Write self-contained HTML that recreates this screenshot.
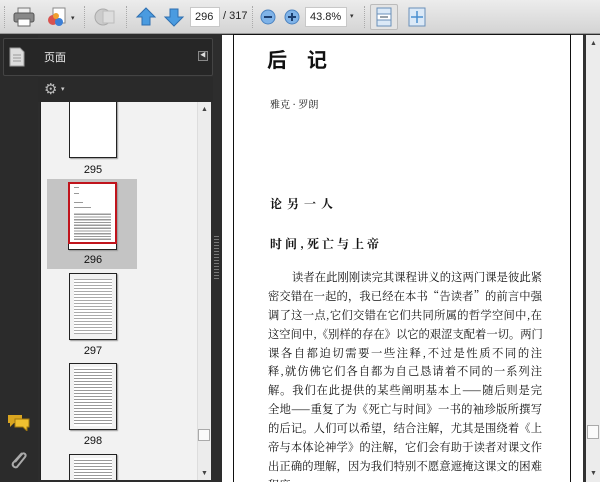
<!DOCTYPE html>
<html><head><meta charset="utf-8"><style>
*{margin:0;padding:0;box-sizing:border-box}
body{width:600px;height:482px;overflow:hidden;position:relative;background:#2d2d2d;font-family:"Liberation Sans","Noto Sans CJK SC",sans-serif}
.abs{position:absolute}
#tb{left:0;top:0;width:600px;height:34px;background:linear-gradient(#ececec,#d4d4d4);border-bottom:1px solid #9a9a9a}
.inp{background:#fff;border:1px solid #c8c8c8;font-size:11px;color:#222;padding:3px 4px;height:20px;top:7px}
.sep{width:2px;height:22px;top:6px;border-left:1px dotted #aaa}
.thumb{background:#fff;border:1.5px solid #222;box-shadow:1px 1px 1px #999}
.lbl{font-size:11px;color:#111;width:50px;text-align:center}
.ln{position:absolute;left:268px;width:274px;font-family:"Noto Serif CJK SC","Noto Sans CJK SC",serif;font-size:11.3px;text-align:justify;text-align-last:justify;color:#111;white-space:nowrap;height:16px;line-height:16px}
.tl{position:absolute;height:1px;background:#999;left:4px;right:4px}
</style></head><body>
<div id="tb" class="abs">
 <div class="abs sep" style="left:4px"></div>
 <svg class="abs" style="left:13px;top:7px" width="22" height="20"><rect x="5" y="1" width="12" height="6" fill="#eee" stroke="#777"/><rect x="1" y="6" width="20" height="9" rx="2" fill="#888" stroke="#555"/><rect x="5" y="12" width="12" height="7" fill="#fff" stroke="#666"/></svg>
 <svg class="abs" style="left:45px;top:6px" width="24" height="22"><rect x="8" y="2" width="12" height="15" fill="#fff" stroke="#888"/><circle cx="8" cy="14" r="5" fill="#d9534f"/><circle cx="14" cy="16" r="4" fill="#3d7fd6"/><circle cx="11" cy="10" r="3" fill="#f0a030"/></svg>
 <div class="abs" style="left:71px;top:14px;font-size:7px;color:#333">▾</div>
 <div class="abs sep" style="left:84px"></div>
 <svg class="abs" style="left:93px;top:6px" width="24" height="22"><circle cx="10" cy="11" r="8" fill="#ccc" stroke="#aaa"/><rect x="10" y="5" width="11" height="12" fill="#ddd" stroke="#bbb"/></svg>
 <div class="abs sep" style="left:126px"></div>
 <svg class="abs" style="left:135px;top:6px" width="22" height="22"><path d="M11 2 L20 11 L15 11 L15 19 L7 19 L7 11 L2 11 Z" fill="#4a9be0" stroke="#2f6fb0"/></svg>
 <svg class="abs" style="left:163px;top:6px" width="22" height="22"><path d="M11 20 L20 11 L15 11 L15 3 L7 3 L7 11 L2 11 Z" fill="#4a9be0" stroke="#2f6fb0"/></svg>
 <div class="abs inp" style="left:190px;width:30px">296</div>
 <div class="abs" style="left:223px;top:10px;font-size:11px;color:#222">/ 317</div>
 <div class="abs sep" style="left:252px"></div>
 <svg class="abs" style="left:260px;top:9px" width="16" height="16"><circle cx="8" cy="8" r="7" fill="#7fb3e8" stroke="#4a82c0"/><rect x="4" y="7" width="8" height="2" fill="#1d3f70"/></svg>
 <svg class="abs" style="left:284px;top:9px" width="16" height="16"><circle cx="8" cy="8" r="7" fill="#7fb3e8" stroke="#4a82c0"/><rect x="4" y="7" width="8" height="2" fill="#1d3f70"/><rect x="7" y="4" width="2" height="8" fill="#1d3f70"/></svg>
 <div class="abs inp" style="left:305px;width:42px">43.8%</div>
 <div class="abs" style="left:350px;top:12px;font-size:7px;color:#333">▾</div>
 <div class="abs sep" style="left:364px"></div>
 <div class="abs" style="left:370px;top:4px;width:28px;height:26px;background:#e4e4e4;border:1px solid #bbb;border-radius:2px"></div>
 <svg class="abs" style="left:376px;top:7px" width="16" height="20"><rect x="1" y="1" width="14" height="18" fill="#dbe9f7" stroke="#6a8fb8"/><rect x="1" y="7" width="14" height="6" fill="#fff" stroke="#6a8fb8"/><path d="M4 10h8" stroke="#345" /></svg>
 <svg class="abs" style="left:408px;top:7px" width="18" height="20"><rect x="1" y="1" width="16" height="18" fill="#dbe9f7" stroke="#6a8fb8"/><path d="M9 4v12M3 10h12" stroke="#4a8fd0" stroke-width="1.5"/></svg>
</div>
<div class="abs" style="left:0;top:35px;width:38px;height:447px;background:#2b2b2b"></div>
<div class="abs" style="left:3px;top:38px;width:210px;height:38px;background:#262626;border:1px solid #444;border-radius:2px"></div>
<svg class="abs" style="left:9px;top:47px" width="16" height="20"><path d="M1 1h10l4 4v14H1z" fill="#ddd" stroke="#999"/><path d="M4 8h8M4 11h8M4 14h8" stroke="#999"/></svg>
<div class="abs" style="left:44px;top:49px;font-size:11px;color:#eee">页面</div>
<div class="abs" style="left:198px;top:51px;width:10px;height:10px;border:1px solid #888;background:#333;font-size:6px;color:#ddd;text-align:center;line-height:8px">◀</div>
<div class="abs" style="left:38px;top:77px;width:175px;height:25px;background:#2a2a2a"></div>
<div class="abs" style="left:44px;top:80px;font-size:15px;color:#bbb">⚙</div>
<div class="abs" style="left:61px;top:85px;font-size:7px;color:#ccc">▾</div>
<div class="abs" style="left:40px;top:102px;width:171px;height:378px;background:#f2f2f2;border-left:1px solid #222;overflow:hidden">
 <div class="abs thumb" style="left:28px;top:-4px;width:48px;height:60px"></div>
 <div class="abs lbl" style="left:27px;top:62px">295</div>
 <div class="abs" style="left:6px;top:77px;width:90px;height:90px;background:#c4c4c4"></div>
 <div class="abs thumb" style="left:27px;top:80px;width:49px;height:68px"></div>
 <div class="abs" style="left:27px;top:80px;width:49px;height:62px;border:2px solid #c0141c"><div class="tl" style="top:3px;right:36px"></div><div class="tl" style="top:9px;right:36px"></div><div class="tl" style="top:18px;right:32px"></div><div class="tl" style="top:23px;right:24px"></div><div class="abs" style="left:4px;right:4px;top:28px;height:28px;background:repeating-linear-gradient(#fff 0 1.5px,#999 1.5px 2.8px)"></div></div>
 <div class="abs lbl" style="left:27px;top:152px">296</div>
 <div class="abs thumb" style="left:28px;top:171px;width:48px;height:67px;background:repeating-linear-gradient(#fff 0 2px,#aaa 2px 3px);background-clip:content-box;padding:5px 4px"></div>
 <div class="abs lbl" style="left:27px;top:243px">297</div>
 <div class="abs thumb" style="left:28px;top:261px;width:48px;height:67px;background:repeating-linear-gradient(#fff 0 2px,#999 2px 3px);background-clip:content-box;padding:3px 4px"></div>
 <div class="abs lbl" style="left:27px;top:333px">298</div>
 <div class="abs thumb" style="left:28px;top:352px;width:48px;height:40px;background:repeating-linear-gradient(#fff 0 2px,#999 2px 3px);background-clip:content-box;padding:3px 4px"></div>
 <div class="abs" style="left:156px;top:0;width:14px;height:378px;background:#ececec;border-left:1px solid #ddd"></div>
 <div class="abs" style="left:160px;top:4px;font-size:7px;color:#444">▲</div>
 <div class="abs" style="left:160px;top:368px;font-size:7px;color:#444">▼</div>
 <div class="abs" style="left:157px;top:327px;width:12px;height:12px;background:#fafafa;border:1px solid #aaa"></div>
</div>
<svg class="abs" style="left:7px;top:413px" width="24" height="18"><path d="M1 2h14v8H7l-4 4v-4H1z" fill="#d9a520"/><path d="M8 6h14v8h-2v4l-4-4H8z" fill="#f0c030" stroke="#a07810"/></svg>
<svg class="abs" style="left:8px;top:449px" width="20" height="22"><path d="M14 4 L5 14 a3 3 0 0 0 4 4 L17 8 a2 2 0 0 0 -3 -3 L7 13" fill="none" stroke="#aaa" stroke-width="2"/></svg>
<div class="abs" style="left:214px;top:236px;width:5px;height:44px;background:repeating-linear-gradient(#777 0 1px,transparent 1px 3px)"></div>
<div class="abs" style="left:222px;top:35px;width:361px;height:447px;background:#fff"></div>
<div class="abs" style="left:233px;top:34px;width:338px;height:448px;background:#fff;border:1.5px solid #111;border-bottom:none"></div>
<div class="abs" style="left:583px;top:35px;width:3px;height:447px;background:#333"></div>
<div class="abs" style="left:586px;top:35px;width:14px;height:447px;background:#ececec"></div>
<div class="abs" style="left:590px;top:40px;font-size:7px;color:#444">▲</div>
<div class="abs" style="left:590px;top:470px;font-size:7px;color:#444">▼</div>
<div class="abs" style="left:587px;top:425px;width:12px;height:14px;background:#fafafa;border:1px solid #aaa"></div>
<div class="abs" style="left:267px;top:44px;font-family:'Noto Sans CJK SC',sans-serif;font-size:20px;font-weight:bold;color:#111;letter-spacing:20px">后记</div>
<div class="abs" style="left:270px;top:96px;font-family:'Noto Serif CJK SC',serif;font-size:10px;color:#111">雅克 · 罗朗</div>
<div class="abs" style="left:270px;top:195px;font-family:'Noto Serif CJK SC',serif;font-size:12px;font-weight:bold;color:#111;letter-spacing:5px">论另一人</div>
<div class="abs" style="left:270px;top:235px;font-family:'Noto Serif CJK SC',serif;font-size:12px;font-weight:bold;color:#111;letter-spacing:3px">时间,死亡与上帝</div>
<div style="position:absolute;left:0;top:0;width:600px;height:482px;overflow:hidden">
<div class="ln" style="top:269px;left:292px;width:250px">读者在此刚刚读完其课程讲义的这两门课是彼此紧</div>
<div class="ln" style="top:288px">密交错在一起的，我已经在本书“告读者”的前言中强</div>
<div class="ln" style="top:307px">调了这一点,它们交错在它们共同所属的哲学空间中,在</div>
<div class="ln" style="top:326px">这空间中,《别样的存在》以它的艰涩支配着一切。两门</div>
<div class="ln" style="top:345px">课各自都迫切需要一些注释,不过是性质不同的注</div>
<div class="ln" style="top:363px">释,就仿佛它们各自都为自己恳请着不同的一系列注</div>
<div class="ln" style="top:382px">解。我们在此提供的某些阐明基本上——随后则是完</div>
<div class="ln" style="top:401px">全地——重复了为《死亡与时间》一书的袖珍版所撰写</div>
<div class="ln" style="top:420px">的后记。人们可以希望，结合注解，尤其是围绕着《上</div>
<div class="ln" style="top:439px">帝与本体论神学》的注解，它们会有助于读者对课文作</div>
<div class="ln" style="top:458px">出正确的理解，因为我们特别不愿意遮掩这课文的困难</div>
<div class="ln" style="top:477px;text-align-last:left">程度</div>
</div>
</body></html>
